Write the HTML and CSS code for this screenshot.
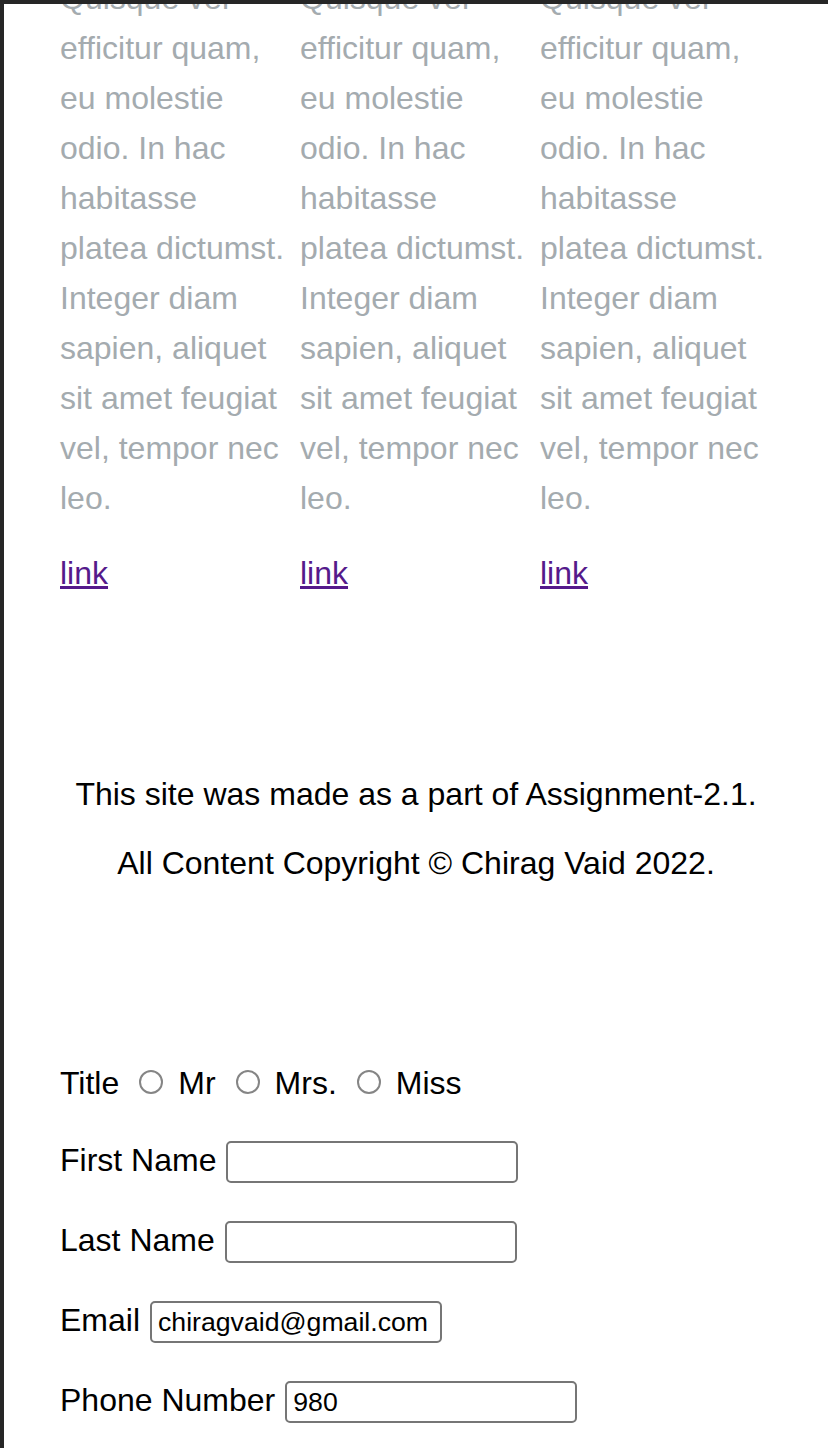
FILE: index.html
```html
<!DOCTYPE html>
<html lang="en">
<head>
<meta charset="utf-8">
<title>Assignment 2.1</title>
<link rel="stylesheet" href="styles.css">
</head>
<body>
<div class="screen">
  <div class="content">
    <section class="columns">
      <div class="column">
        <p class="col-text">Quisque vel efficitur quam, eu molestie odio. In hac habitasse platea dictumst. Integer diam sapien, aliquet sit amet feugiat vel, tempor nec leo.</p>
        <p class="col-link"><a href="#">link</a></p>
      </div>
      <div class="column">
        <p class="col-text">Quisque vel efficitur quam, eu molestie odio. In hac habitasse platea dictumst. Integer diam sapien, aliquet sit amet feugiat vel, tempor nec leo.</p>
        <p class="col-link"><a href="#">link</a></p>
      </div>
      <div class="column">
        <p class="col-text">Quisque vel efficitur quam, eu molestie odio. In hac habitasse platea dictumst. Integer diam sapien, aliquet sit amet feugiat vel, tempor nec leo.</p>
        <p class="col-link"><a href="#">link</a></p>
      </div>
    </section>

    <footer class="footer">
      <p>This site was made as a part of Assignment-2.1.</p>
      <p>All Content Copyright &copy; Chirag Vaid 2022.</p>
    </footer>

    <form class="form">
      <div class="row">
        <span class="label">Title</span>
        <input class="radio" type="radio" name="title" id="t-mr"><label for="t-mr">Mr</label>
        <input class="radio" type="radio" name="title" id="t-mrs"><label for="t-mrs">Mrs.</label>
        <input class="radio" type="radio" name="title" id="t-miss"><label for="t-miss">Miss</label>
      </div>
      <div class="row field">
        <label for="fname">First Name</label>
        <input class="text-input" type="text" id="fname">
      </div>
      <div class="row field">
        <label for="lname">Last Name</label>
        <input class="text-input" type="text" id="lname">
      </div>
      <div class="row field">
        <label for="email">Email</label>
        <input class="text-input" type="email" id="email" value="chiragvaid@gmail.com">
      </div>
      <div class="row field">
        <label for="phone">Phone Number</label>
        <input class="text-input" type="text" id="phone" value="980">
      </div>
    </form>
  </div>
</div>
</body>
</html>
```

FILE: styles.css
```css
html {
  background: #262626;
}

body {
  margin: 0;
  padding: 4px 0 0 4px;
  font-family: "Liberation Sans", Arial, Helvetica, sans-serif;
  font-size: 32px;
  color: #000;
}

.screen {
  background: #fff;
  height: 1444px;
  overflow: hidden;
}

.content {
  margin-top: -31px;
  padding-left: 56px;
}

.columns {
  display: grid;
  grid-template-columns: repeat(3, 240px);
}

.column {
  padding-right: 10px;
}

.col-text {
  margin: 0;
  line-height: 50px;
  color: #a4abaf;
}

.col-link {
  margin: 32px 0 0;
  line-height: normal;
}

.col-link a {
  color: #551a8b;
}

.footer {
  margin-top: 184px;
  margin-left: -56px;
  display: flex;
  flex-direction: column;
  gap: 32px;
  text-align: center;
}

.footer p {
  margin: 0;
  line-height: normal;
}

.form {
  margin-top: 181px;
  display: flex;
  flex-direction: column;
  gap: 38px;
}

.row {
  display: flex;
  align-items: center;
  height: 40px;
}

.field {
  align-items: baseline;
  height: auto;
}

.field label {
  margin-right: 10px;
}

.radio {
  appearance: none;
  -webkit-appearance: none;
  box-sizing: border-box;
  width: 24px;
  height: 24px;
  margin: 0 15px 0 20px;
  border: 2px solid #858585;
  border-radius: 50%;
  background: #fff;
  position: relative;
  top: -1px;
}

.text-input {
  box-sizing: border-box;
  width: 292px;
  height: 42px;
  margin: 0;
  padding: 2px 6px;
  border: 2px solid #767676;
  border-radius: 5px;
  font-family: "Liberation Sans", Arial, Helvetica, sans-serif;
  font-size: 26.67px;
  color: #000;
  background: #fff;
}
```
